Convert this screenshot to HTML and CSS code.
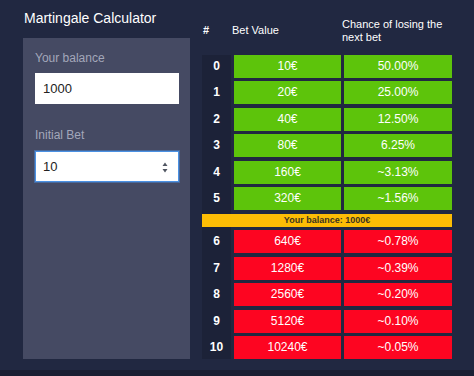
FILE: index.html
```html
<!DOCTYPE html>
<html lang="en">
<head>
    <meta charset="UTF-8">
    <meta name="viewport" content="width=device-width, initial-scale=1.0">
    <title>Martingale Calculator</title>
    <link rel="stylesheet" href="styles.css">
</head>
<body>
    <div class="page">
        <div class="side">
            <h1 class="title">Martingale Calculator</h1>
            <div class="panel">
                <label class="label" for="balance">Your balance</label>
                <div class="field">
                    <input class="input" id="balance" type="text" value="1000">
                </div>
                <label class="label label-next" for="bet">Initial Bet</label>
                <div class="field focused">
                    <input class="input" id="bet" type="text" value="10" autofocus>
                    <svg class="spin" width="8" height="18" viewBox="0 0 8 18">
                        <path d="M4 4.5 L6.5 8 L1.5 8 Z" fill="#505662"/>
                        <path d="M1.5 11 L6.5 11 L4 14.5 Z" fill="#505662"/>
                    </svg>
                </div>
            </div>
        </div>

        <div class="results">
            <div class="head">
                <span class="head-num">#</span>
                <span>Bet Value</span>
                <span>Chance of losing the<br>next bet</span>
            </div>
            <div class="rows">
                <div class="row win"><span class="num">0</span><span class="cell">10€</span><span class="cell">50.00%</span></div>
                <div class="row win"><span class="num">1</span><span class="cell">20€</span><span class="cell">25.00%</span></div>
                <div class="row win"><span class="num">2</span><span class="cell">40€</span><span class="cell">12.50%</span></div>
                <div class="row win"><span class="num">3</span><span class="cell">80€</span><span class="cell">6.25%</span></div>
                <div class="row win"><span class="num">4</span><span class="cell">160€</span><span class="cell">~3.13%</span></div>
                <div class="row win"><span class="num">5</span><span class="cell">320€</span><span class="cell">~1.56%</span></div>
                <div class="limit">Your balance: 1000€</div>
                <div class="row lose"><span class="num">6</span><span class="cell">640€</span><span class="cell">~0.78%</span></div>
                <div class="row lose"><span class="num">7</span><span class="cell">1280€</span><span class="cell">~0.39%</span></div>
                <div class="row lose"><span class="num">8</span><span class="cell">2560€</span><span class="cell">~0.20%</span></div>
                <div class="row lose"><span class="num">9</span><span class="cell">5120€</span><span class="cell">~0.10%</span></div>
                <div class="row lose"><span class="num">10</span><span class="cell">10240€</span><span class="cell">~0.05%</span></div>
            </div>
        </div>
    </div>
</body>
</html>
```

FILE: styles.css
```css
body {
    margin: 0;
    background: #1a1f33;
    font-family: 'Liberation Sans', Arial, sans-serif;
    color: #fff;
}
.page {
    height: 370px;
    box-sizing: border-box;
    background: #212841;
    display: flex;
    gap: 12px;
    padding: 0 22px 0 23px;
}
.side {
    width: 167px;
    display: flex;
    flex-direction: column;
}
.title {
    font-size: 14px;
    font-weight: 400;
    line-height: 17px;
    margin: 10px 0 11px 1px;
    color: #fff;
}
.panel {
    flex: 1;
    margin-bottom: 11px;
    background: #454a63;
    padding: 13px 11px 0 12px;
}
.label {
    display: block;
    font-size: 12px;
    line-height: 14px;
    color: #a3a7ba;
    margin-bottom: 8px;
}
.label-next {
    margin-top: 24px;
    margin-bottom: 9px;
}
.field {
    height: 31px;
    box-sizing: border-box;
    background: #fff;
    display: flex;
    align-items: center;
    padding: 0 10px 0 8px;
}
.field.focused {
    border: 1px solid #4b91e3;
    box-shadow: 0 0 0 1px rgba(75, 145, 227, 0.45);
    padding: 0 9px 0 7px;
}
.input {
    flex: 1;
    min-width: 0;
    border: 0;
    outline: none;
    padding: 0;
    font-family: inherit;
    font-size: 13px;
    color: #222;
    background: transparent;
    caret-color: #222;
}
.spin {
    flex: none;
}
.results {
    width: 250px;
    padding-top: 17px;
}
.head {
    height: 27px;
    display: grid;
    grid-template-columns: 29px 110px 1fr;
    align-items: center;
    padding-left: 1px;
    margin-bottom: 10.5px;
    font-size: 11px;
    line-height: 13px;
    color: #fff;
}
.head-num {
    font-weight: 700;
}
.rows {
    display: flex;
    flex-direction: column;
    gap: 3.5px;
    background: linear-gradient(to right, #1c2238 0, #1c2238 29px, transparent 29px);
}
.row {
    display: grid;
    grid-template-columns: 29px 107px 108px;
    column-gap: 3px;
    height: 23px;
    line-height: 23px;
    text-align: center;
    font-size: 12px;
}
.num {
    font-weight: 700;
}
.win .cell {
    background: #5dc40b;
}
.lose .cell {
    background: #fd0521;
}
.limit {
    height: 13px;
    line-height: 13px;
    background: #fdbd05;
    color: #3b3420;
    text-align: center;
    font-size: 9px;
    font-weight: 700;
}
```
